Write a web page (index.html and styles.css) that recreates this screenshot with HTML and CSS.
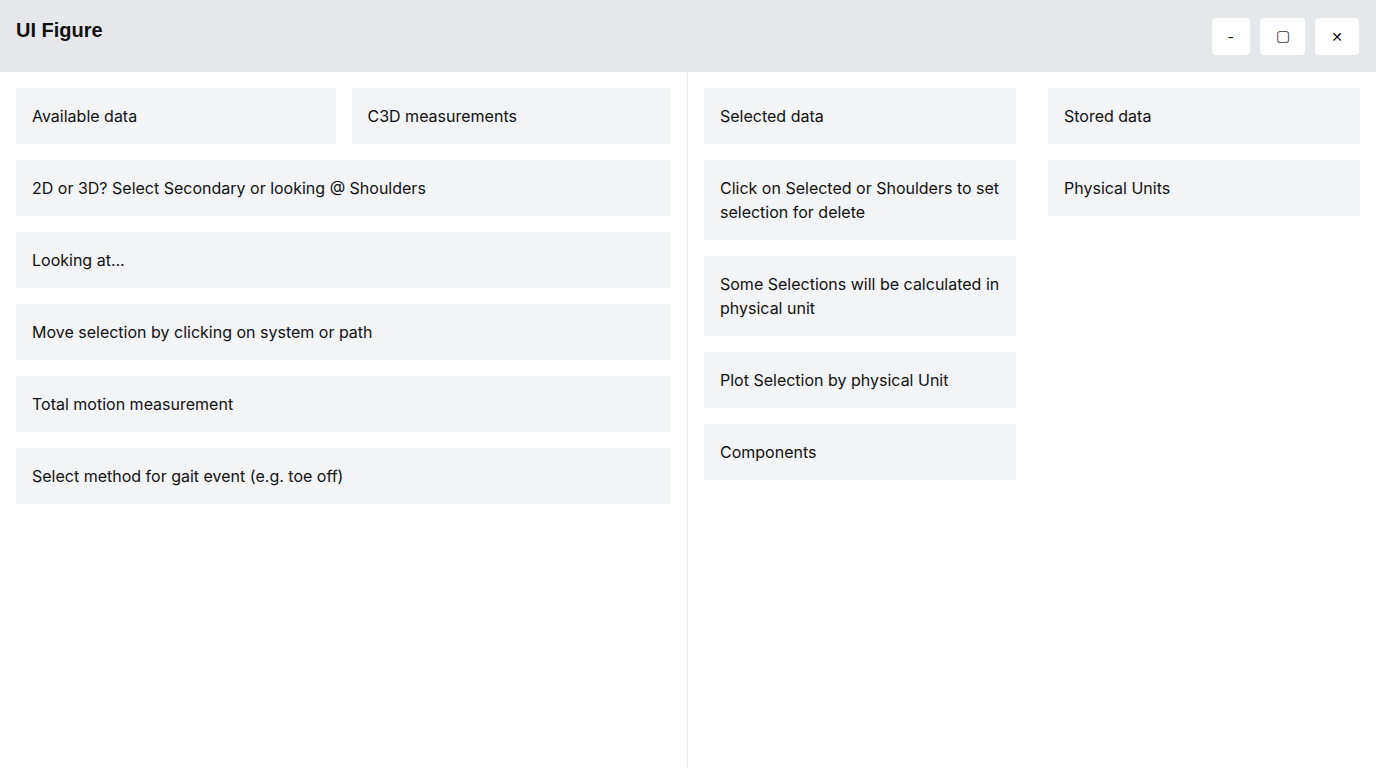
FILE: index.html
```html
<!DOCTYPE html>
<html>
<head>
<meta charset="utf-8">
<link rel="stylesheet" href="styles.css">
</head>
<body>
<header class="titlebar">
  <h1 class="title">UI Figure</h1>
  <div class="controls">
    <button class="ctl">-</button>
    <button class="ctl sq">▢</button>
    <button class="ctl">✕</button>
  </div>
</header>
<main class="main">
  <section class="panel left">
    <div class="row two">
      <div class="card">Available data</div>
      <div class="card">C3D measurements</div>
    </div>
    <div class="card">2D or 3D? Select Secondary or looking @ Shoulders</div>
    <div class="card">Looking at...</div>
    <div class="card">Move selection by clicking on system or path</div>
    <div class="card">Total motion measurement</div>
    <div class="card">Select method for gait event (e.g. toe off)</div>
  </section>
  <section class="panel right">
    <div class="col">
      <div class="card">Selected data</div>
      <div class="card">Click on Selected or Shoulders to set selection for delete</div>
      <div class="card">Some Selections will be calculated in physical unit</div>
      <div class="card">Plot Selection by physical Unit</div>
      <div class="card">Components</div>
    </div>
    <div class="col">
      <div class="card">Stored data</div>
      <div class="card">Physical Units</div>
    </div>
  </section>
</main>
</body>
</html>
```
FILE: styles.css
```css
* { box-sizing: border-box; }
html, body { margin: 0; padding: 0; }
body {
  font-family: Inter, "Noto Sans", sans-serif;
  font-size: 16px;
  line-height: 24px;
  color: #111111;
  background: #ffffff;
  height: 768px;
  overflow: hidden;
}
.titlebar {
  height: 72px;
  background: #e5e7eb;
  display: flex;
  justify-content: space-between;
  align-items: flex-start;
  padding: 16px 17px 16px 16px;
}
.title {
  margin: 0;
  font-family: "Liberation Sans", Arial, sans-serif;
  font-weight: 700;
  font-size: 20px;
  line-height: 28px;
  color: #111111;
}
.controls {
  display: flex;
  gap: 10px;
  padding-top: 2px;
}
.ctl {
  background: #ffffff;
  border: none;
  border-radius: 4px;
  padding: 8px 16px;
  font-family: Inter, "DejaVu Sans", sans-serif;
  font-size: 14px;
  line-height: 21px;
  color: #111111;
  min-width: 38px;
}
.ctl.sq {
  width: 45px;
  font-family: "DejaVu Sans", sans-serif;
  font-size: 15px;
  color: #333333;
}
.ctl:nth-child(3) { width: 44px; }
.main {
  display: flex;
  height: 696px;
}
.panel {
  width: 688px;
  padding: 16px;
}
.left {
  border-right: 1px solid #e5e7eb;
  display: flex;
  flex-direction: column;
  gap: 16px;
}
.row.two {
  display: grid;
  grid-template-columns: 1fr 1fr;
  gap: 16px;
}
.right {
  display: grid;
  grid-template-columns: 1fr 1fr;
  column-gap: 32px;
  align-items: start;
}
.col {
  display: flex;
  flex-direction: column;
  gap: 16px;
}
.card {
  background: #f3f4f6;
  padding: 16px;
  min-height: 56px;
}
```
